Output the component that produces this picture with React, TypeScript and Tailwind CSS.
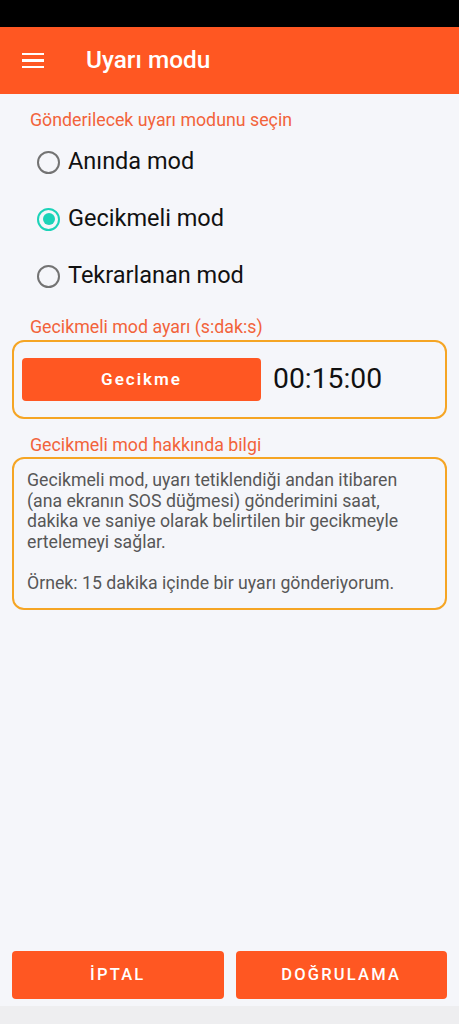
const modes = ["Anında mod", "Gecikmeli mod", "Tekrarlanan mod"];

function Radio({ checked }: { checked: boolean }) {
  return checked ? (
    <span className="flex h-[23px] w-[23px] items-center justify-center rounded-full border-[2.5px] border-[#1cd3b8]">
      <span className="h-[12px] w-[12px] rounded-full bg-[#1cd3b8]" />
    </span>
  ) : (
    <span className="h-[23px] w-[23px] rounded-full border-[2.5px] border-[#737373]" />
  );
}

export default function App() {
  const selected = 1;

  return (
    <div className="flex h-[1024px] w-[459px] flex-col bg-[#f5f6fa] font-['Roboto',sans-serif]">
      <div className="h-[27px] bg-black" />
      <header className="flex h-[67px] items-center bg-[#ff5722] pl-[22px]">
        <div className="flex w-[22px] flex-col gap-[4px]">
          <span className="h-[2.5px] bg-white" />
          <span className="h-[2.5px] bg-white" />
          <span className="h-[2.5px] bg-white" />
        </div>
        <h1 className="ml-[42px] text-[24.4px] font-medium text-white">Uyarı modu</h1>
      </header>

      <main className="flex flex-1 flex-col px-[12px]">
        <p className="mt-[15px] pl-[18px] text-[17.8px] leading-[22px] text-[#f2633a]">
          Gönderilecek uyarı modunu seçin
        </p>
        <div className="mt-[18px] flex flex-col gap-[31px] pl-[25px]">
          {modes.map((m, i) => (
            <label key={m} className="flex h-[26px] items-center gap-[8px]">
              <Radio checked={i === selected} />
              <span className="text-[23.5px] text-[#111]">{m}</span>
            </label>
          ))}
        </div>

        <p className="mt-[27px] pl-[18px] text-[17.8px] leading-[22px] text-[#f2633a]">
          Gecikmeli mod ayarı (s:dak:s)
        </p>
        <div className="mt-[2px] flex h-[79px] items-center rounded-[12px] border-2 border-[#f5a524] px-[8px]">
          <button className="h-[43px] w-[239px] rounded-[4px] bg-[#ff5722] text-[17px] font-semibold tracking-[2px] text-white">
            Gecikme
          </button>
          <span className="ml-[12px] text-[28.3px] text-[#111]">00:15:00</span>
        </div>

        <p className="mt-[15px] pl-[18px] text-[17.8px] leading-[22px] text-[#f2633a]">
          Gecikmeli mod hakkında bilgi
        </p>
        <div className="mt-[1px] rounded-[12px] border-2 border-[#f5a524] px-[13px] pt-[11px] pb-[14px] text-[17.7px] leading-[20.6px] text-[#575757]">
          <p>
            Gecikmeli mod, uyarı tetiklendiği andan itibaren (ana ekranın SOS düğmesi) gönderimini saat,
            dakika ve saniye olarak belirtilen bir gecikmeyle ertelemeyi sağlar.
          </p>
          <p className="mt-[20.6px]">Örnek: 15 dakika içinde bir uyarı gönderiyorum.</p>
        </div>

        <div className="mt-auto mb-[7px] flex gap-[12px]">
          <button className="h-[48px] flex-1 rounded-[4px] bg-[#ff5722] text-[16.5px] font-medium tracking-[2.2px] text-white">
            İPTAL
          </button>
          <button className="h-[48px] flex-1 rounded-[4px] bg-[#ff5722] text-[16.5px] font-medium tracking-[2.2px] text-white">
            DOĞRULAMA
          </button>
        </div>
      </main>
      <div className="h-[18px] bg-[#eeeef0]" />
    </div>
  );
}
